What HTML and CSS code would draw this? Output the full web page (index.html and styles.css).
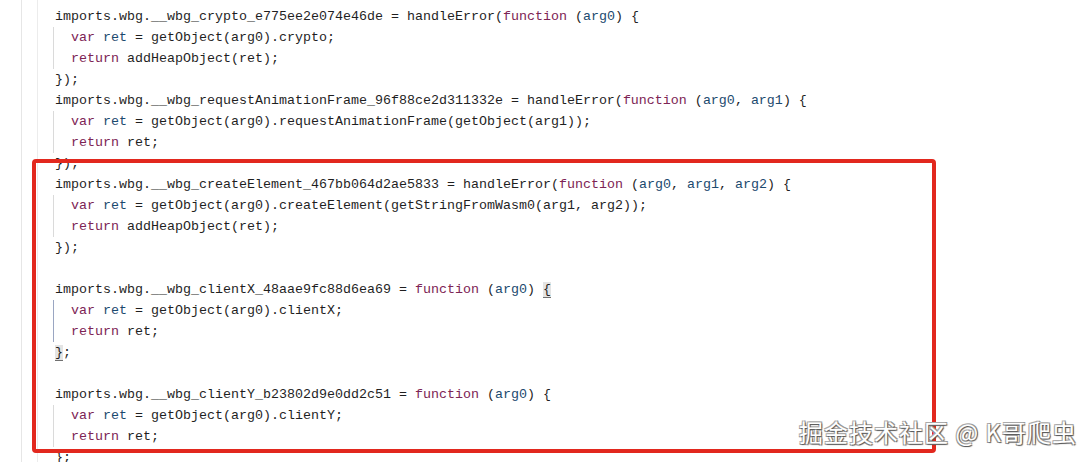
FILE: index.html
```html
<!DOCTYPE html>
<html lang="zh-CN">
<head>
<meta charset="utf-8">
<title>code</title>
<link rel="stylesheet" href="styles.css">
</head>
<body>
<div class="editor">
  <div class="gutter"></div>
  <div class="gutter2"></div>
  <div class="code">
    <div class="line">imports.wbg.__wbg_crypto_e775ee2e074e46de = handleError(<span class="kw">function</span> (<span class="df">arg0</span>) {</div>
    <div class="body">
      <div class="line">  <span class="kw">var</span> <span class="df">ret</span> = getObject(arg0).crypto;</div>
      <div class="line">  <span class="kw">return</span> addHeapObject(ret);</div>
    </div>
    <div class="line">});</div>
    <div class="line">imports.wbg.__wbg_requestAnimationFrame_96f88ce2d311332e = handleError(<span class="kw">function</span> (<span class="df">arg0</span>, <span class="df">arg1</span>) {</div>
    <div class="body">
      <div class="line">  <span class="kw">var</span> <span class="df">ret</span> = getObject(arg0).requestAnimationFrame(getObject(arg1));</div>
      <div class="line">  <span class="kw">return</span> ret;</div>
    </div>
    <div class="line">});</div>
    <div class="line">imports.wbg.__wbg_createElement_467bb064d2ae5833 = handleError(<span class="kw">function</span> (<span class="df">arg0</span>, <span class="df">arg1</span>, <span class="df">arg2</span>) {</div>
    <div class="body">
      <div class="line">  <span class="kw">var</span> <span class="df">ret</span> = getObject(arg0).createElement(getStringFromWasm0(arg1, arg2));</div>
      <div class="line">  <span class="kw">return</span> addHeapObject(ret);</div>
    </div>
    <div class="line">});</div>
    <div class="line"> </div>
    <div class="line">imports.wbg.__wbg_clientX_48aae9fc88d6ea69 = <span class="kw">function</span> (<span class="df">arg0</span>) <span class="match">{</span></div>
    <div class="body active">
      <div class="line">  <span class="kw">var</span> <span class="df">ret</span> = getObject(arg0).clientX;</div>
      <div class="line">  <span class="kw">return</span> ret;</div>
    </div>
    <div class="line"><span class="match">}</span>;</div>
    <div class="line"> </div>
    <div class="line">imports.wbg.__wbg_clientY_b23802d9e0dd2c51 = <span class="kw">function</span> (<span class="df">arg0</span>) {</div>
    <div class="body">
      <div class="line">  <span class="kw">var</span> <span class="df">ret</span> = getObject(arg0).clientY;</div>
      <div class="line">  <span class="kw">return</span> ret;</div>
    </div>
    <div class="line">};</div>
  </div>
</div>
<div class="highlight-box"></div>
<div class="watermark">掘金技术社区 @ K哥爬虫</div>
</body>
</html>
```

FILE: styles.css
```css
html, body {
  margin: 0;
  padding: 0;
  background: #ffffff;
  overflow: hidden;
}

body {
  width: 1092px;
  height: 462px;
  position: relative;
}

.editor {
  display: flex;
  height: 462px;
  overflow: hidden;
}

.gutter {
  width: 21px;
  border-right: 1px solid #e6e6e6;
  flex: none;
}

.gutter2 {
  width: 15px;
  border-right: 1px solid #ececec;
  flex: none;
}

.code {
  padding: 6px 0 0 15px;
  font-family: "Liberation Mono", "DejaVu Sans Mono", monospace;
  font-size: 13.33px;
  color: #1f1f1f;
}

.line {
  height: 21px;
  line-height: 21px;
  padding-left: 2px;
  white-space: pre;
}

.body {
  border-left: 1px solid #dadada;
}

.body .line {
  padding-left: 1px;
}

.body.active {
  border-left-color: #9aa6c2;
}

.kw {
  color: #7d2454;
}

.df {
  color: #1c4a6e;
}

.match {
  background: #e4e4e4;
  border-bottom: 1px solid #707070;
}

.highlight-box {
  position: absolute;
  left: 32px;
  top: 159px;
  width: 896px;
  height: 286px;
  border: 4px solid #e2281e;
  border-radius: 4px;
}

.watermark {
  position: absolute;
  left: 799px;
  top: 416px;
  font-family: "Noto Sans CJK SC", "Noto Sans", sans-serif;
  font-size: 24px;
  letter-spacing: 1px;
  line-height: 32px;
  color: #ffffff;
  text-shadow: 1px 1px 1px #555, -1px -1px 0 #aaa, 1px -1px 0 #999, -1px 1px 0 #999;
  white-space: nowrap;
}
```
